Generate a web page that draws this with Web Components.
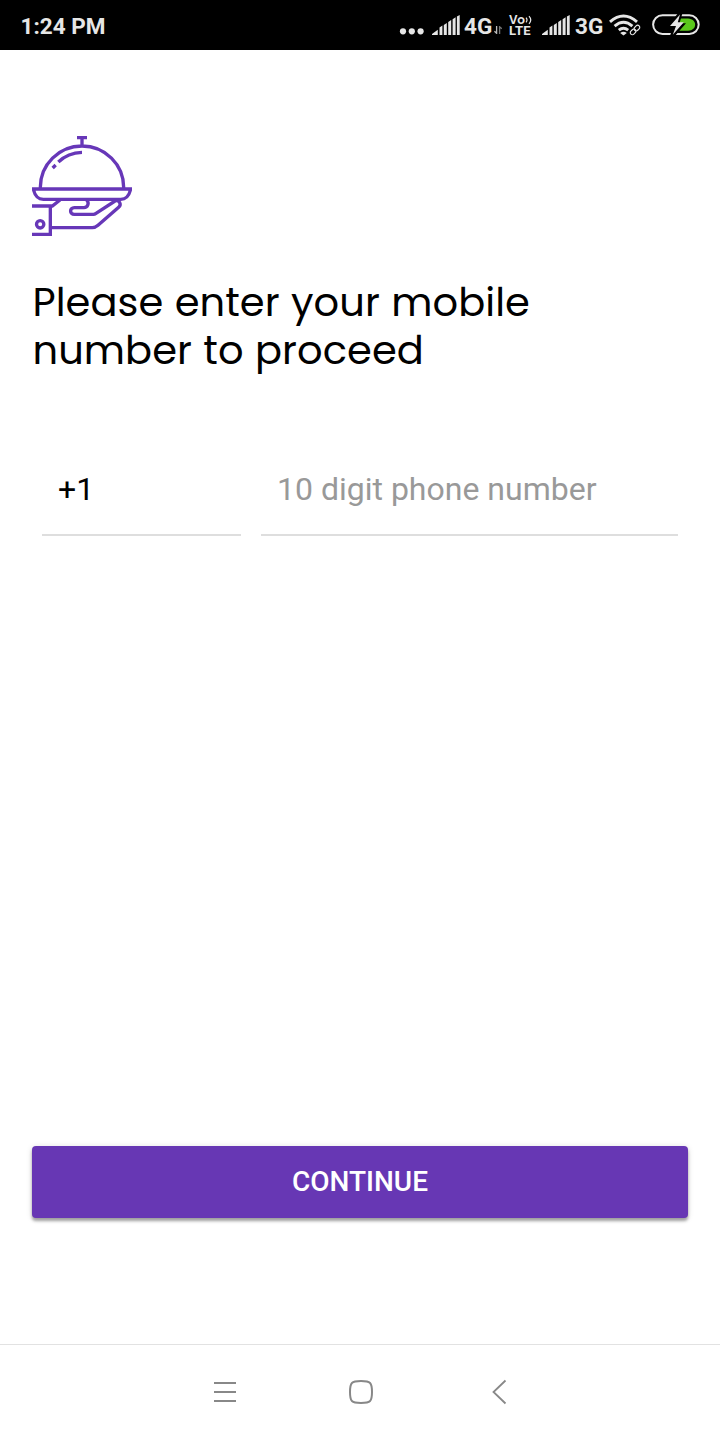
<!DOCTYPE html>
<html lang="en">
<head>
<meta charset="utf-8">
<title>Mobile number</title>
<style>
html,body{margin:0;height:100%;background:#fff}
</style>
</head>
<body>
<phone-screen></phone-screen>
<script>
const define = (name, html) => customElements.define(name, class extends HTMLElement {
  constructor() {
    super();
    this.attachShadow({mode: 'open'}).innerHTML = html;
  }
});

define('signal-bars', `<style>:host{display:block;flex:none;width:28px;height:20px}svg{display:block}</style>
<svg width="28" height="20" fill="#e6e6e6"><path d="M0 20V19L5.800 14.800V20ZM7.500 20V12.500L10.400 10.500V20ZM11.800 20V10L14.800 8V20ZM16.200 20V7L19.200 5V20ZM20.600 20V4.200L23.600 2.200V20ZM24.900 20V1.500L27.700 0V20Z"/></svg>`);

define('volte-badge', `<style>:host{display:block;flex:none;width:23px;height:22px;color:#e6e6e6;font:700 12.500px Roboto,sans-serif}
div{display:flex;white-space:nowrap}svg{display:block}
.v{height:10px;line-height:10px;font:600 12px/10px Poppins,Roboto,sans-serif;letter-spacing:-.2px}.l{height:12px;line-height:12px;font-size:13px;letter-spacing:.3px}</style>
<div class="v">Vo<svg width="8" height="10" fill="none" stroke="#e6e6e6" stroke-width="1.2"><path d="M1 2.700Q3 5 1 7.300M4 1.200Q7.500 5 4 8.800"/></svg></div><div class="l">LTE</div>`);

define('wifi-icon', `<style>:host{display:block;flex:none;width:32px;height:22px}svg{display:block}</style>
<svg width="32" height="22" fill="none" stroke="#e6e6e6"><g stroke-width="2.900"><path d="M1 7.800Q14.500-4 28 7.800M5.600 12.200Q14.500 4.400 23.400 12.200M9.800 16.200Q14.500 12.400 19.200 16.200"/></g><path d="M11.200 18.900Q14.500 16.400 17.800 18.900L14.500 21.600Z" fill="#e6e6e6" stroke="none"/><g transform="translate(26 16) rotate(-45)"><rect x="-6.500" y="-3.500" width="13" height="7" fill="#000" stroke="none"/><rect x="-5.800" y="-2.100" width="6.200" height="4.200" rx="2.100" stroke-width="1.2"/><rect x="-.4" y="-2.100" width="6.200" height="4.200" rx="2.100" stroke-width="1.2"/></g></svg>`);

define('battery-icon', `<style>:host{display:block;flex:none;width:48px;height:22px}svg{display:block}</style>
<svg width="48" height="22"><rect x="1.100" y="1.200" width="45.600" height="18.800" rx="9.400" fill="none" stroke="#e6e6e6" stroke-width="2"/><path d="M28 4.500H36C45.500 5 45.500 16.500 36 16.800H27Z" fill="#5bc91c"/><path d="M26.200-1 15.500 12.200H21.500L17.500 23H22L34 9.200H27.500L30.500-1Z" fill="#000"/><path d="M28 .4 18 12H24L20.800 20.700 31.800 8.200H25.800Z" fill="#e6e6e6"/></svg>`);

define('status-bar', `<style>
:host{display:flex;align-items:flex-start;height:50px;box-sizing:border-box;padding:14px 20px 0 21px;background:#000;color:#e6e6e6;font:700 22.500px/24px Roboto,sans-serif;white-space:nowrap}
svg{display:block}.time{flex:1;margin-left:-.5px}
.dots{margin:14px 8px 0 0}.g4{width:30px;margin-left:4px}.arrows{margin:12px 7px 0 0}
signal-bars{margin-top:1px}.g3{width:34px;margin-left:5px}
volte-badge{margin-right:10px;margin-top:1px}wifi-icon{margin-right:11px}
</style>
<span class="time">1:24 PM</span>
<svg class="dots" width="25" height="7" fill="#e6e6e6"><circle cx="4" cy="3.300" r="3.100"/><circle cx="12.800" cy="3.300" r="3.100"/><circle cx="21.600" cy="3.300" r="3.100"/></svg>
<signal-bars></signal-bars><span class="g4">4G</span>
<svg class="arrows" width="8" height="8" fill="none" stroke-width="1.3"><path d="M2.600 0V7.300L.4 5.300" stroke="#bbb"/><path d="M5.600 8V.8L7.800 2.800" stroke="#777"/></svg>
<volte-badge></volte-badge>
<signal-bars></signal-bars><span class="g3">3G</span>
<wifi-icon></wifi-icon><battery-icon></battery-icon>`);

define('serving-logo', `<style>:host{display:block;width:100px;height:100px}svg{display:block}</style>
<svg width="100" height="100" viewBox="30 30 300 300" fill="none" stroke="#6737b8" stroke-width="10">
<path d="M165 34.500H195M180 34V60M55 188V184A125 124 0 0 1 305 184V188M92 126 101 117M109 108Q138 80 180 79"/>
<path d="M34 189H326C322 208 313 220 296 220H64C47 220 38 208 34 189Z"/>
<path d="M30 240H85V325H30M85 240H91L114 222M194 222C203 231 197 245 186 245H157C142 245 142 265 157 265H214Q218 265 222 262L279 225C291 220 300 235 290 244L228 298Q220 305 211 305H87"/>
<circle cx="54.500" cy="295" r="11"/></svg>`);

define('screen-title', `<style>:host{display:block;height:96px;color:#000;font:400 40px/48px Poppins,Inter,sans-serif;font-feature-settings:"cv11" 1;letter-spacing:.06px;word-spacing:.6px;padding-left:.5px;white-space:nowrap}</style>
<div>Please enter your mobile<br>number to proceed</div>`);

define('text-field', `<style>:host{display:block;box-sizing:border-box;height:92px;padding:25px 16px 0;border-bottom:2px solid #dedede;font:400 32px/40px Roboto,sans-serif;white-space:nowrap}</style><slot></slot>`);

define('raised-button', `<style>:host{display:flex;align-items:center;justify-content:center;height:72px;border-radius:4px;background:#6737b4;color:#fff;font:500 28px/32px Roboto,sans-serif;box-shadow:0 3px 3px rgba(0,0,0,.32),0 1px 6px rgba(0,0,0,.14)}</style><slot></slot>`);

define('nav-bar', `<style>:host{display:flex;align-items:center;justify-content:space-between;box-sizing:border-box;height:96px;border-top:1px solid #e2e2e2;padding:0 208px 2px 212px}
svg{display:block}.home{margin-right:3px}</style>
<svg width="26" height="26" fill="none" stroke="#888" stroke-width="1.8"><path d="M2 4H24M2 13H24M2 22H24"/></svg>
<svg class="home" width="26" height="26" fill="none" stroke="#888" stroke-width="2"><path d="M13 2C22.500 2 24 3.500 24 13S22.500 24 13 24 2 22.500 2 13 3.500 2 13 2Z"/></svg>
<svg width="26" height="26" fill="none" stroke="#888" stroke-width="1.8"><path d="M19.500 1.500 7.500 13 19.500 24.500"/></svg>`);

define('phone-screen', `<style>
:host{display:flex;flex-direction:column;height:1440px;width:720px;background:#fff;overflow:hidden}
main{flex:1;display:flex;flex-direction:column;padding:86px 32px 126px}
screen-title{margin-top:42px}
.fields{display:grid;grid-template-columns:199px 417px;gap:20px;margin:70px 10px 0;flex:1;align-content:start}
.hint{color:#999}
</style>
<status-bar></status-bar>
<main><serving-logo></serving-logo><screen-title></screen-title>
<div class="fields"><text-field>+1</text-field><text-field class="hint">10 digit phone number</text-field></div>
<raised-button>CONTINUE</raised-button></main>
<nav-bar></nav-bar>`);
</script>
</body>
</html>
